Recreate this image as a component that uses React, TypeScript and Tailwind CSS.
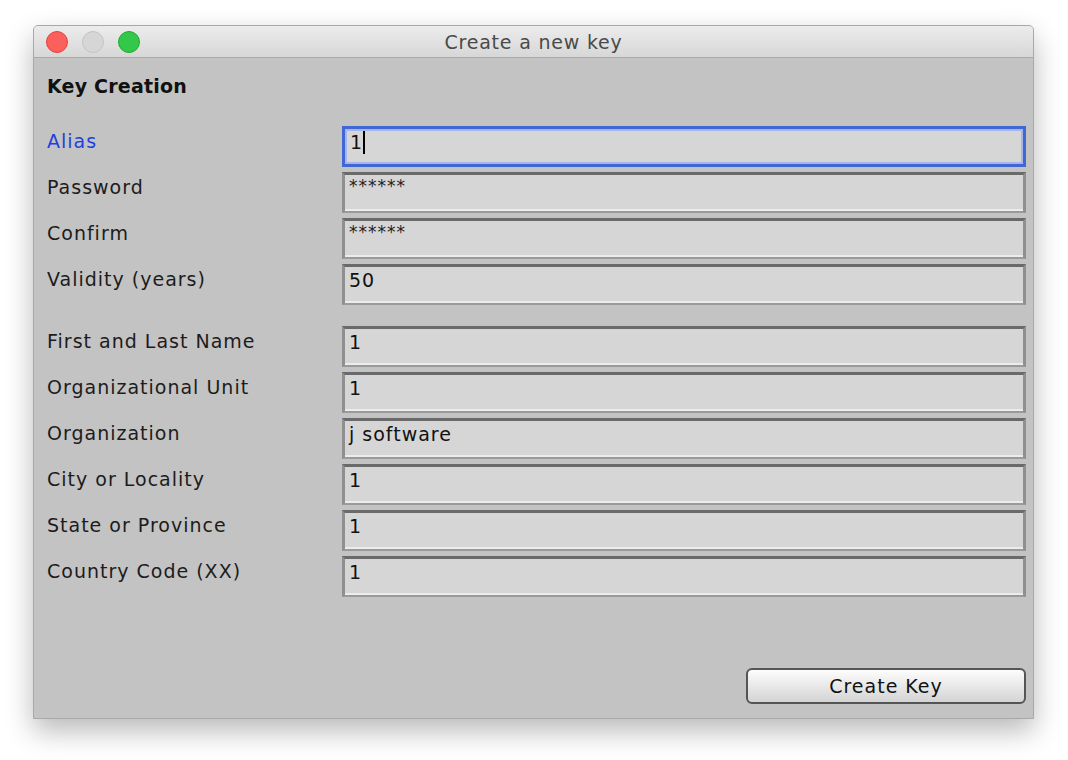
import React from 'react';

interface Field {
  label: string;
  value: string;
  focused?: boolean;
  secret?: boolean;
}

const keyFields: Field[] = [
  { label: 'Alias', value: '1', focused: true },
  { label: 'Password', value: '******', secret: true },
  { label: 'Confirm', value: '******', secret: true },
  { label: 'Validity (years)', value: '50' },
];

const ownerFields: Field[] = [
  { label: 'First and Last Name', value: '1' },
  { label: 'Organizational Unit', value: '1' },
  { label: 'Organization', value: 'j software' },
  { label: 'City or Locality', value: '1' },
  { label: 'State or Province', value: '1' },
  { label: 'Country Code (XX)', value: '1' },
];

const font = 'font-["DejaVu_Sans","Liberation_Sans",sans-serif]';

function FieldRow({ field }: { field: Field }) {
  return (
    <div className="flex h-[46px]">
      <div
        className={`w-[295px] shrink-0 pt-[3px] text-[19px] leading-[24px] tracking-[1px] ${
          field.focused ? 'text-[#1f3fe0]' : 'text-[#1c1c1c]'
        }`}
      >
        {field.label}
      </div>
      {field.focused ? (
        <div className="h-[41px] flex-1 border-[3px] border-[#4166d6] bg-[#d6d6d6] shadow-[inset_0_0_0_2px_#a7b6e6]">
          <div className="flex pl-[5px] pt-[1px] text-[19px] leading-[24px] text-[#111]">
            <span>{field.value}</span>
            <span className="ml-[1px] mt-[1px] h-[23px] w-[2px] bg-black" />
          </div>
        </div>
      ) : (
        <div className="h-[41px] flex-1 border-t-[3px] border-l-[3px] border-r-[3px] border-b-[2px] border-t-[#6a6a6a] border-l-[#8f8f8f] border-r-[#8f8f8f] border-b-[#9a9a9a] bg-[#d6d6d6] shadow-[inset_0_-2px_0_#ececec]">
          {field.secret ? (
            <div className="pl-[4px] pt-[2px] text-[17px] leading-[18px] tracking-[1px] text-[#222]">
              {field.value}
            </div>
          ) : (
            <div className="pl-[4px] pt-[1px] text-[19px] leading-[24px] tracking-[1px] text-[#111]">{field.value}</div>
          )}
        </div>
      )}
    </div>
  );
}

export default function App() {
  return (
    <div className="min-h-[760px] w-[1068px] bg-white pl-[33px] pt-[25px]">
      <div
        className={`flex h-[694px] w-[1001px] flex-col overflow-hidden rounded-t-[5px] border border-[#a9a9a9] bg-[#c3c3c3] shadow-[0_12px_28px_rgba(0,0,0,0.28)] ${font}`}
      >
        {/* Title bar */}
        <div className="relative flex h-[32px] shrink-0 items-center border-b border-[#aaaaaa] bg-gradient-to-b from-[#ececec] to-[#d7d7d7]">
          <div className="flex items-center gap-[14px] pl-[12px]">
            <span className="h-[22px] w-[22px] rounded-full border border-[#e0443e] bg-[#fc605c]" />
            <span className="h-[22px] w-[22px] rounded-full border border-[#c4c4c4] bg-[#d6d6d6]" />
            <span className="h-[22px] w-[22px] rounded-full border border-[#1aac2c] bg-[#34c84a]" />
          </div>
          <div className="absolute inset-0 flex items-center justify-center pt-[2px] text-[19px] tracking-[0.8px] text-[#4a4a4a]">
            Create a new key
          </div>
        </div>

        {/* Content */}
        <div className="flex flex-1 flex-col pl-[13px] pr-[7px] pt-[16px] pb-[14px]">
          <div className="text-[19px] font-bold leading-[24px] tracking-[0.2px] text-[#111]">Key Creation</div>
          <div className="mt-[28px]">
            {keyFields.map((f) => (
              <FieldRow key={f.label} field={f} />
            ))}
          </div>
          <div className="mt-[16px]">
            {ownerFields.map((f) => (
              <FieldRow key={f.label} field={f} />
            ))}
          </div>
          <div className="flex-1" />
          <div className="flex justify-end">
            <button className="h-[36px] w-[280px] rounded-[6px] border-2 border-[#555] bg-gradient-to-b from-[#fdfdfd] to-[#d4d4d4] text-[19px] leading-[22px] tracking-[1px] text-[#111]">
              Create Key
            </button>
          </div>
        </div>
      </div>
    </div>
  );
}
